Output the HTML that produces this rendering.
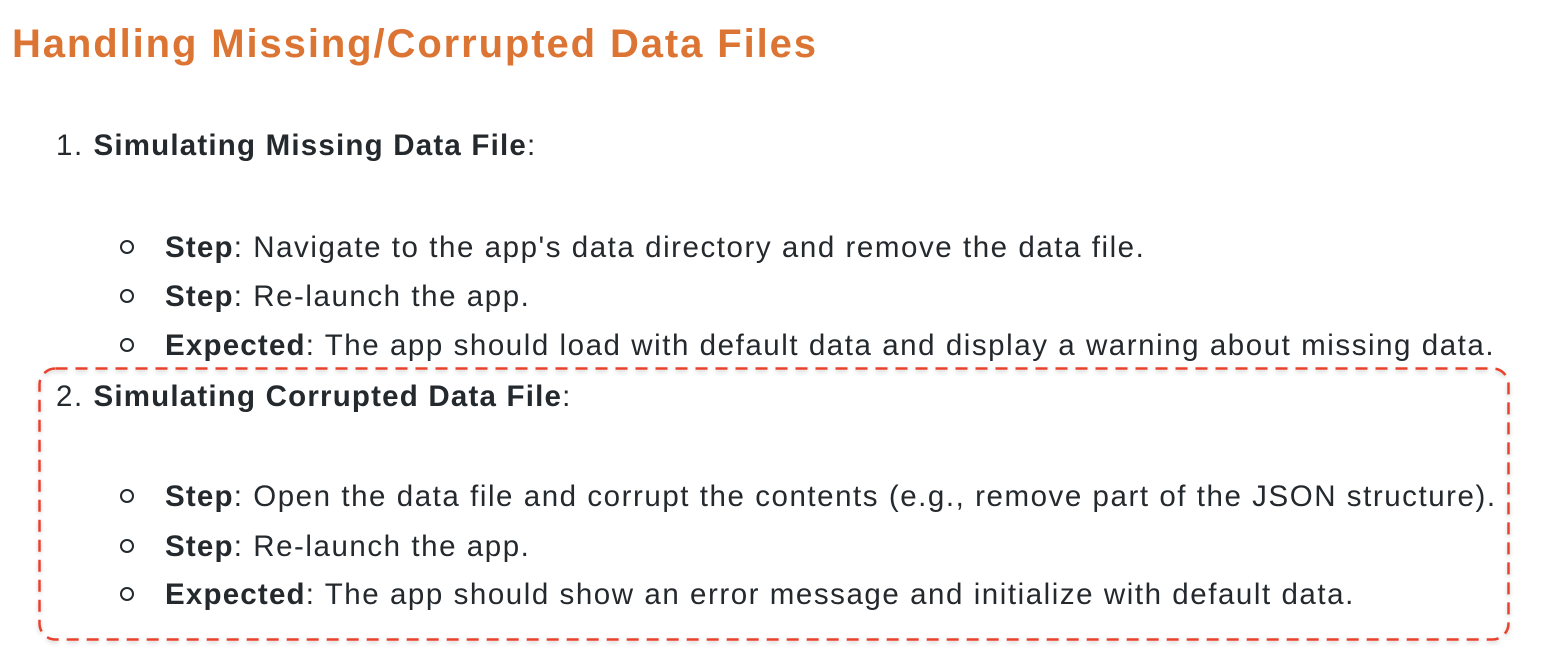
<!DOCTYPE html>
<html><head><style>
body{margin:0;width:1562px;height:658px;background:#fff;position:relative;overflow:hidden;font-family:"Liberation Sans",sans-serif;color:#24292e}
.l{position:absolute;font-size:29.5px;letter-spacing:1.55px;white-space:nowrap;line-height:36px}
.l b{letter-spacing:1.2px}
h1{position:absolute;left:12px;top:19px;margin:0;font-size:40px;letter-spacing:1.9px;color:#dc7433;font-weight:bold;line-height:50px;white-space:nowrap}
.c{position:absolute;width:10px;height:10px;border:2.5px solid #24292e;border-radius:50%}
svg{position:absolute;left:0;top:0}
</style></head><body>
<h1>Handling Missing/Corrupted Data Files</h1>
<div class="l" style="left:56px;top:128px">1. <b>Simulating Missing Data File</b>:</div>
<div class="c" style="left:120px;top:240px"></div>
<div class="l" style="left:165px;top:230px"><b>Step</b>: Navigate to the app's data directory and remove the data file.</div>
<div class="c" style="left:120px;top:289px"></div>
<div class="l" style="left:165px;top:279px"><b>Step</b>: Re-launch the app.</div>
<div class="c" style="left:120px;top:338px"></div>
<div class="l" style="left:165px;top:328px"><b>Expected</b>: The app should load with default data and display a warning about missing data.</div>
<svg width="1562" height="658"><defs><filter id="s"><feDropShadow dx="0" dy="2" stdDeviation="2" flood-opacity="0.2"/></filter></defs>
<rect x="39.5" y="368.5" width="1469" height="271" rx="16" fill="none" stroke="#e8432e" stroke-width="2.5" stroke-dasharray="12 8" filter="url(#s)"/></svg>
<div class="l" style="left:56px;top:379px">2. <b>Simulating Corrupted Data File</b>:</div>
<div class="c" style="left:120px;top:489px"></div>
<div class="l" style="left:165px;top:479px"><b>Step</b>: Open the data file and corrupt the contents (e.g., remove part of the JSON structure).</div>
<div class="c" style="left:120px;top:539px"></div>
<div class="l" style="left:165px;top:529px"><b>Step</b>: Re-launch the app.</div>
<div class="c" style="left:120px;top:587px"></div>
<div class="l" style="left:165px;top:577px"><b>Expected</b>: The app should show an error message and initialize with default data.</div>
</body></html>
